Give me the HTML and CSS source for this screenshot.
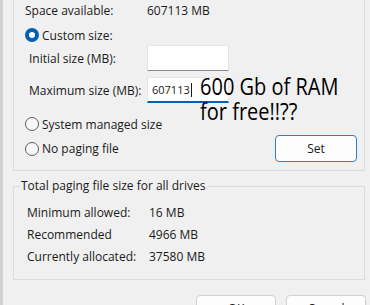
FILE: index.html
```html
<!DOCTYPE html>
<html lang="en">
<head>
  <meta charset="UTF-8">
  <title>Virtual Memory</title>
  <link rel="stylesheet" href="styles.css">
</head>
<body>
  <div class="window">
    <div class="group">
      <div class="row">
        <span class="key">Space available:</span>
        <span>607113 MB</span>
      </div>

      <label class="radio-row first">
        <span class="radio checked"></span>
        Custom size:
      </label>

      <div class="size-row">
        <span class="size-label">Initial size (MB):</span>
        <span class="field"></span>
      </div>
      <div class="size-row second">
        <span class="size-label">Maximum size (MB):</span>
        <span class="field focused">607113<span class="caret"></span></span>
      </div>

      <label class="radio-row system">
        <span class="radio"></span>
        System managed size
      </label>

      <div class="set-row">
        <label class="radio-row">
          <span class="radio"></span>
          No paging file
        </label>
        <button class="btn default">Set</button>
      </div>

      <div class="meme">600 Gb of RAM<br>for free!!??</div>
    </div>

    <fieldset class="totals">
      <legend>Total paging file size for all drives</legend>
      <div class="row">
        <span class="key">Minimum allowed:</span>
        <span>16 MB</span>
      </div>
      <div class="row">
        <span class="key">Recommended</span>
        <span>4966 MB</span>
      </div>
      <div class="row">
        <span class="key">Currently allocated:</span>
        <span>37580 MB</span>
      </div>
    </fieldset>

    <div class="buttons">
      <button class="btn">OK</button>
      <button class="btn">Cancel</button>
    </div>
  </div>
</body>
</html>
```

FILE: styles.css
```css
html, body {
  margin: 0;
  padding: 0;
  height: 305px;
  overflow: hidden;
}
body {
  font-family: "Open Sans", "Noto Sans", sans-serif;
  font-size: 12px;
  color: #1a1a1a;
  background: #f0f0f0;
}
.window {
  height: 305px;
  border-left: 3px solid #d2d2d2;
  overflow: hidden;
}
.group {
  position: relative;
  margin: -1px 5px 0 10px;
  padding: 0 7px 8px 11px;
  border: 1px solid #dcdcdc;
  display: flex;
  flex-direction: column;
}
.row {
  display: flex;
  height: 22px;
  line-height: 22px;
}
.row .key {
  width: 122px;
}
.radio-row {
  display: flex;
  align-items: center;
  height: 22px;
  gap: 3px;
}
.radio-row.first {
  margin-top: 2px;
}
.radio-row.system {
  margin-top: 10px;
}
.radio {
  width: 12px;
  height: 12px;
  border: 1px solid #5f5f5f;
  border-radius: 50%;
  background: #f7f7f7;
}
.radio.checked {
  width: 6px;
  height: 6px;
  border: 4px solid #005fb8;
  background: #fff;
}
.size-row {
  display: flex;
  align-items: center;
  height: 26px;
  margin-top: -1px;
  padding-left: 4px;
}
.size-row.second {
  margin-top: 6px;
}
.size-label {
  width: 118px;
}
.field {
  width: 72px;
  height: 24px;
  padding: 0 4px;
  line-height: 23px;
  background: #fff;
  border: 1px solid #e6e6e6;
  border-bottom-color: #8a8a8a;
  font-size: 11px;
}
.field.focused {
  border-bottom: 2px solid #005fb8;
  height: 23px;
}
.caret {
  display: inline-block;
  width: 1px;
  height: 14px;
  margin-left: 1px;
  vertical-align: -3px;
  background: #1a1a1a;
}
.set-row {
  display: flex;
  justify-content: space-between;
  align-items: center;
  height: 27px;
}
.btn {
  font-family: inherit;
  font-size: 12px;
  color: #1a1a1a;
  background: #fdfdfd;
  border: 1px solid #d0d0d0;
  border-radius: 4px;
  padding: 0;
}
.btn.default {
  width: 82px;
  height: 27px;
  border-color: #2f7fd0;
}
.meme {
  position: absolute;
  left: 186px;
  top: 74px;
  font-family: "Open Sans", sans-serif;
  font-size: 23px;
  line-height: 25px;
  color: #000;
  white-space: nowrap;
  transform: scaleX(0.87);
  transform-origin: left top;
}
.totals {
  margin: 7px 5px 0 10px;
  padding: 0 0 11px 13px;
  border: 1px solid #dcdcdc;
}
.totals legend {
  margin-left: -7px;
  padding: 0 1px;
  line-height: 16px;
}
.totals .row:first-of-type {
  margin-top: 8px;
}
.buttons {
  display: flex;
  justify-content: flex-end;
  gap: 10px;
  margin: 15px 4px 0 0;
}
.buttons .btn {
  width: 80px;
  height: 26px;
}
```
